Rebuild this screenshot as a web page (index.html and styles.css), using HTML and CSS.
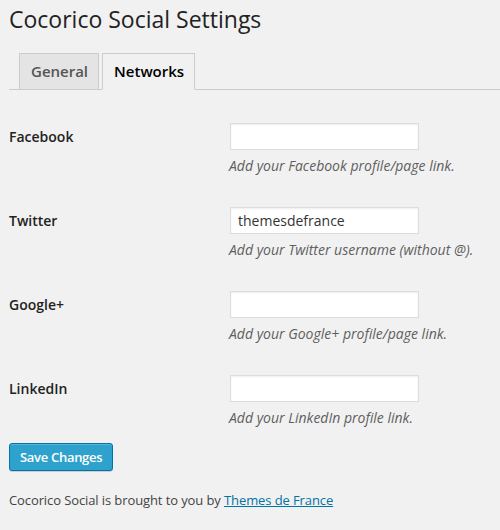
FILE: index.html
```html
<!DOCTYPE html>
<html>
<head>
<meta charset="utf-8">
<link rel="stylesheet" href="styles.css">
</head>
<body>
<div class="wrap">
  <h2 class="title">Cocorico Social Settings</h2>
  <div class="tabs">
    <a class="tab">General</a>
    <a class="tab active">Networks</a>
  </div>
  <div class="form">
    <div class="row">
      <div class="label">Facebook</div>
      <div class="field">
        <input class="input" type="text" value="">
        <p class="desc">Add your Facebook profile/page link.</p>
      </div>
    </div>
    <div class="row">
      <div class="label">Twitter</div>
      <div class="field">
        <input class="input" type="text" value="themesdefrance">
        <p class="desc">Add your Twitter username (without @).</p>
      </div>
    </div>
    <div class="row">
      <div class="label">Google+</div>
      <div class="field">
        <input class="input" type="text" value="">
        <p class="desc">Add your Google+ profile/page link.</p>
      </div>
    </div>
    <div class="row">
      <div class="label">LinkedIn</div>
      <div class="field">
        <input class="input" type="text" value="">
        <p class="desc">Add your LinkedIn profile link.</p>
      </div>
    </div>
  </div>
  <button class="save">Save Changes</button>
  <p class="footer">Cocorico Social is brought to you by <a class="link" href="#">Themes de France</a></p>
</div>
</body>
</html>
```

FILE: styles.css
```css
html, body {
  margin: 0;
  padding: 0;
  background: #f1f1f1;
}
body {
  font-family: "Open Sans", sans-serif;
  color: #444;
  font-size: 13px;
}
.wrap {
  padding: 5px 0 0 9px;
}
.title {
  margin: 0;
  font-size: 23px;
  font-weight: 400;
  line-height: 29px;
  color: #222;
}
.tabs {
  margin-top: 19px;
  display: flex;
  gap: 3px;
  padding-left: 10px;
  border-bottom: 1px solid #ccc;
  height: 36px;
  align-items: flex-end;
}
.tab {
  box-sizing: border-box;
  height: 37px;
  margin-bottom: -1px;
  padding: 5px 10px 0 11px;
  font-size: 15px;
  font-weight: 600;
  line-height: 24px;
  color: #555;
  background: #e4e4e4;
  border: 1px solid #ccc;
}
.tab.active {
  background: #f1f1f1;
  color: #000;
  border-bottom-color: #f1f1f1;
}
.form {
  display: flex;
  flex-direction: column;
  padding-top: 1px;
}
.row {
  display: grid;
  grid-template-columns: 220px 1fr;
  height: 84px;
  padding-top: 32px;
  box-sizing: border-box;
}
.label {
  font-size: 14px;
  font-weight: 600;
  color: #222;
  line-height: 28px;
}
.field {
  display: flex;
  flex-direction: column;
}
.input {
  box-sizing: border-box;
  width: 189px;
  height: 27px;
  margin: 0 0 0 1px;
  padding: 2px 7px 3px;
  border: 1px solid #ddd;
  background: #fff;
  font-family: "Open Sans", sans-serif;
  font-size: 14px;
  color: #333;
  outline: none;
  box-shadow: inset 0 1px 2px rgba(0,0,0,0.07);
}
.desc {
  margin: 6px 0 0;
  font-size: 14px;
  font-style: italic;
  line-height: 20px;
  color: #5f5f5f;
}
.save {
  display: block;
  margin-top: 16px;
  height: 28px;
  padding: 0 10px 1px;
  font-family: "Open Sans", sans-serif;
  font-size: 13px;
  font-weight: 600;
  letter-spacing: -0.3px;
  color: #fff;
  background: #2ea2cc;
  border: 1px solid #0074a2;
  border-radius: 3px;
  box-shadow: inset 0 1px 0 rgba(120,200,230,0.5), 0 1px 0 rgba(0,0,0,0.15);
}
.footer {
  margin: 19px 0 0;
  font-size: 13px;
  line-height: 20px;
  letter-spacing: -0.1px;
  color: #444;
}
.link {
  color: #0074a2;
  text-decoration: underline;
}
```
